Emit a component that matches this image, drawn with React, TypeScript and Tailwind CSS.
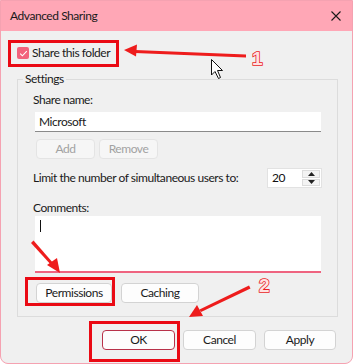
import { ReactNode } from 'react';

const font = { fontFamily: 'Lato, "Noto Sans", sans-serif' };

function Btn({ children, className = '', disabled = false }: { children: ReactNode; className?: string; disabled?: boolean }) {
  return (
    <div
      className={`h-[20px] flex items-center justify-center rounded-[4px] border text-[12px] ${
        disabled ? 'bg-[#f6f6f6] border-[#e4e4e4] text-[#a2a2a2]' : 'bg-[#fdfdfd] border-[#d3d3d3] text-[#1b1b1b]'
      } ${className}`}
    >
      {children}
    </div>
  );
}

// red annotation arrows, boxes and numbers drawn on top of the dialog
function Annotations() {
  return (
    <svg className="absolute inset-0 pointer-events-none" width="353" height="364">
      <g fill="none" stroke="#ea0a14" strokeWidth="3">
        <rect x="9.5" y="41.5" width="108" height="24" />
        <rect x="26.5" y="278.5" width="87" height="26" />
        <rect x="90.5" y="322.5" width="88" height="38" />
      </g>
      <g fill="#ee1c1c">
        {/* arrow 1 */}
        <polygon points="246,54.5 246,57.5 135,53 135,50" />
        <polygon points="124,50 137,44.5 136,56.5" />
        {/* arrow pointing to Permissions */}
        <polygon points="31,243 33.5,240.5 54,264 52,266" />
        <polygon points="60,273 47,265 57,258" />
        {/* arrow 2 */}
        <polygon points="249,285.5 250.5,288.5 201,312 199.5,309.5" />
        <polygon points="189,317 197,305 203,316" />
      </g>
      <g fontFamily='"Liberation Sans", Arial, sans-serif' fontWeight="700" fontSize="19" fill="#ffe2e2" stroke="#ea1c24" strokeWidth="1.6" paintOrder="stroke">
        <text x="252" y="65">1</text>
        <text x="259" y="292">2</text>
      </g>
      {/* mouse pointer */}
      <path d="M211.5 59.5 L211.5 75 L215 71.5 L218.5 78.5 L220.5 77.5 L217.5 70.5 L222.5 70.5 Z" fill="#fff" stroke="#111" strokeWidth="1" strokeLinejoin="round" />
    </svg>
  );
}

export default function App() {
  return (
    <div className="relative w-[353px] h-[364px] bg-white tracking-[-0.45px]" style={font}>
      <div className="w-full h-full flex flex-col border border-[#f5a2b1] bg-[#ffa7b6] rounded-b-[8px] overflow-hidden">
        {/* Title bar */}
        <div className="h-[30px] flex items-center justify-between pl-[9px] pr-[11px] shrink-0">
          <span className="text-[12px] text-[#1a1a1a]">Advanced Sharing</span>
          <svg width="10" height="10" viewBox="0 0 10 10">
            <path d="M0.5 0.5 L9.5 9.5 M9.5 0.5 L0.5 9.5" stroke="#1a1a1a" strokeWidth="1.1" />
          </svg>
        </div>

        {/* Body */}
        <div className="flex-1 bg-[#f0f0f0] flex flex-col text-[12px] text-[#1a1a1a]">
          <div className="mt-[14px] ml-[16px] h-[16px] flex items-center gap-[3px]">
            <div className="w-[12px] h-[12px] rounded-[2px] bg-[#f2627c] flex items-center justify-center">
              <svg width="9" height="9" viewBox="0 0 9 9">
                <path d="M1.2 4.6 L3.4 6.8 L7.8 2.2" fill="none" stroke="#fff" strokeWidth="1.1" />
              </svg>
            </div>
            <span>Share this folder</span>
          </div>

          {/* Settings group */}
          <div className="relative mt-[18px] ml-[16px] w-[321px] border border-[#dcdcdc] pt-[12px] pl-[15px] pr-[15px] pb-[13px] flex flex-col">
            <span className="absolute -top-[9px] left-[5px] px-[2px] bg-[#f0f0f0] leading-[16px]">Settings</span>
            <div className="h-[16px] leading-[16px]">Share name:</div>
            <div className="mt-[4px] ml-[2px] w-[286px] h-[20px] bg-white border-b border-[#8a8a8a] flex items-center pl-[4px]">
              Microsoft
            </div>
            <div className="mt-[7px] ml-[3px] flex gap-[4px]">
              <Btn disabled className="w-[59px]">Add</Btn>
              <Btn disabled className="w-[59px]">Remove</Btn>
            </div>
            <div className="mt-[9px] h-[20px] flex items-center justify-between">
              <span className="whitespace-nowrap">Limit the number of simultaneous users to:</span>
              <div className="w-[55px] h-[20px] bg-white border border-[#e2e2e2] flex items-center">
                <span className="flex-1 pl-[4px] text-[#111]">20</span>
                <div className="w-[20px] h-full flex flex-col gap-[1px] p-[1px] bg-white">
                  <div className="flex-1 bg-[#f3f3f3] border border-[#dcdcdc] flex items-center justify-center">
                    <svg width="7" height="4" viewBox="0 0 7 4"><path d="M3.5 0 L7 4 L0 4 Z" fill="#222" /></svg>
                  </div>
                  <div className="flex-1 bg-[#f3f3f3] border border-[#dcdcdc] flex items-center justify-center">
                    <svg width="7" height="4" viewBox="0 0 7 4"><path d="M0 0 L7 0 L3.5 4 Z" fill="#222" /></svg>
                  </div>
                </div>
              </div>
            </div>
            <div className="mt-[12px] h-[16px] leading-[16px]">Comments:</div>
            <div className="ml-[2px] w-[286px] h-[57px] bg-white border-b-2 border-[#ef6480] pl-[5px] pt-[4px]">
              <div className="w-[1px] h-[12px] bg-[#111]" />
            </div>
            <div className="mt-[10px] ml-[3px] flex gap-[9px]">
              <Btn className="w-[76px]">Permissions</Btn>
              <Btn className="w-[78px]">Caching</Btn>
            </div>
          </div>

          {/* Dialog buttons */}
          <div className="mt-[13px] pr-[16px] flex justify-end gap-[8px]">
            <Btn className="w-[73px] !border-[#b8324a]">OK</Btn>
            <Btn className="w-[73px]">Cancel</Btn>
            <Btn className="w-[72px]">Apply</Btn>
          </div>
        </div>
      </div>
      <Annotations />
    </div>
  );
}
